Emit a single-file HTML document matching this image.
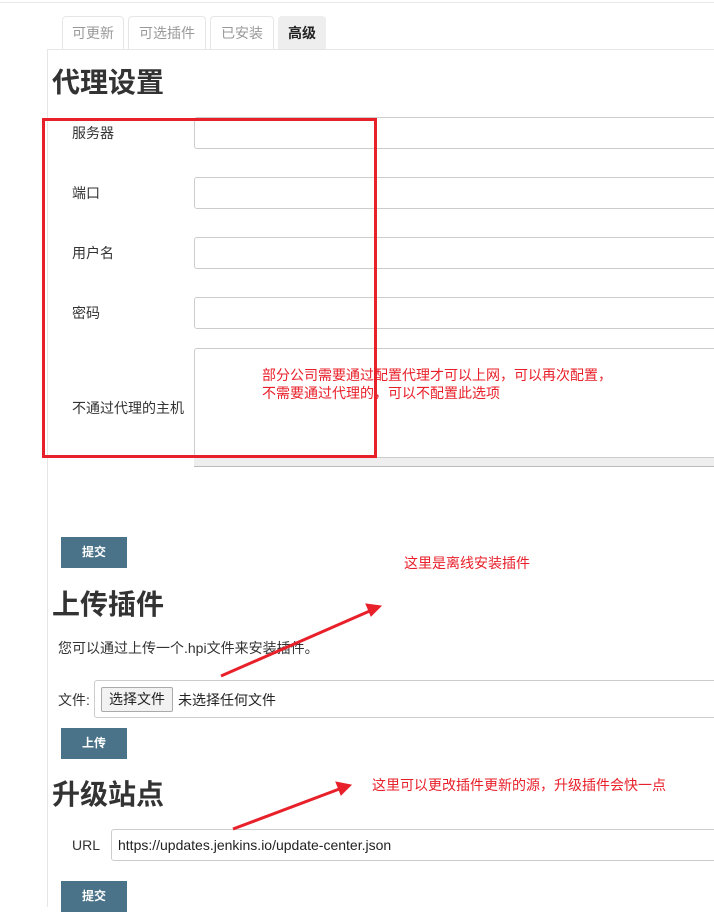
<!DOCTYPE html>
<html><head><meta charset="utf-8"><style>
body{margin:0;width:714px;height:907px;overflow:hidden;background:#fff;position:relative;font-family:"Liberation Sans","Noto Sans CJK SC",sans-serif;color:#333}
.a{position:absolute}
.tab{position:absolute;top:16px;height:33px;border:1px solid #e6e6e6;border-bottom:none;border-radius:4px 4px 0 0;color:#999;font-size:14px;line-height:33px;text-align:center;box-sizing:border-box}
h2{position:absolute;margin:0;font-size:28px;font-weight:bold;color:#333;left:52px;line-height:32px}
.lbl{position:absolute;font-size:14px;color:#333;left:72px}
.in{position:absolute;left:194px;width:530px;height:32px;border:1px solid #ccc;border-radius:3px;box-sizing:border-box;background:#fff}
.btn{position:absolute;left:61px;width:66px;height:31px;background:#4a7389;color:#fff;font-size:12px;font-weight:bold;line-height:31px;text-align:center}
.red{position:absolute;color:#e8202a;font-size:14px;line-height:18px}
</style></head><body>
<div class="a" style="left:0;top:2px;width:714px;height:1px;background:#e8e8e8"></div>
<div class="tab" style="left:62px;width:62px">可更新</div>
<div class="tab" style="left:128px;width:78px">可选插件</div>
<div class="tab" style="left:210px;width:64px">已安装</div>
<div class="tab" style="left:278px;width:48px;background:#eee;color:#222;font-weight:bold;border-color:#eee">高级</div>
<div class="a" style="left:47px;top:49px;width:667px;height:1px;background:#e6e6e6"></div>
<div class="a" style="left:47px;top:49px;width:1px;height:858px;background:#e6e6e6"></div>
<h2 style="top:67px">代理设置</h2>
<div class="lbl" style="top:123px">服务器</div>
<div class="lbl" style="top:183px">端口</div>
<div class="lbl" style="top:243px">用户名</div>
<div class="lbl" style="top:303px">密码</div>
<div class="lbl" style="top:398px">不通过代理的主机</div>
<div class="in" style="top:117px"></div>
<div class="in" style="top:177px"></div>
<div class="in" style="top:237px"></div>
<div class="in" style="top:297px"></div>
<div class="in" style="top:348px;height:110px"></div>
<div class="a" style="left:194px;top:458px;width:520px;height:8px;background:#eee;border-bottom:1px solid #bbb"></div>
<div class="a" style="left:42px;top:118px;width:335px;height:340px;border:3px solid #e8202a;box-sizing:border-box"></div>
<div class="red" style="left:262px;top:366px">部分公司需要通过配置代理才可以上网，可以再次配置，<br>不需要通过代理的，可以不配置此选项</div>
<div class="btn" style="top:537px">提交</div>
<div class="red" style="left:404px;top:554px">这里是离线安装插件</div>
<h2 style="top:589px">上传插件</h2>
<div class="a" style="left:58px;top:638px;font-size:14px">您可以通过上传一个.hpi文件来安装插件。</div>
<div class="a" style="left:58px;top:690px;font-size:14px">文件:</div>
<div class="in" style="left:94px;top:680px;height:38px;width:630px"></div>
<div class="a" style="left:101px;top:687px;width:72px;height:25px;border:1px solid #aaa;border-radius:2px;background:#f2f2f2;box-sizing:border-box;font-size:14px;line-height:23px;text-align:center;color:#222">选择文件</div>
<div class="a" style="left:178px;top:690px;font-size:14px;color:#222">未选择任何文件</div>
<div class="btn" style="top:728px">上传</div>
<h2 style="top:779px">升级站点</h2>
<div class="red" style="left:372px;top:776px">这里可以更改插件更新的源，升级插件会快一点</div>
<div class="a" style="left:72px;top:837px;font-size:14px">URL</div>
<div class="in" style="left:111px;top:829px;height:32px;width:620px"></div>
<div class="a" style="left:118px;top:837px;font-size:14px;color:#222">https://updates.jenkins.io/update-center.json</div>
<div class="btn" style="top:881px">提交</div>
<svg class="a" style="left:0;top:0" width="714" height="907">
<g stroke="#e8202a" stroke-width="3" fill="#e8202a">
<line x1="221" y1="676" x2="372" y2="610"/>
<polygon points="381,606 366,604 371,616" stroke-width="1"/>
<line x1="233" y1="829" x2="342" y2="788"/>
<polygon points="351,785 336,782 341,795" stroke-width="1"/>
</g></svg>
</body></html>
